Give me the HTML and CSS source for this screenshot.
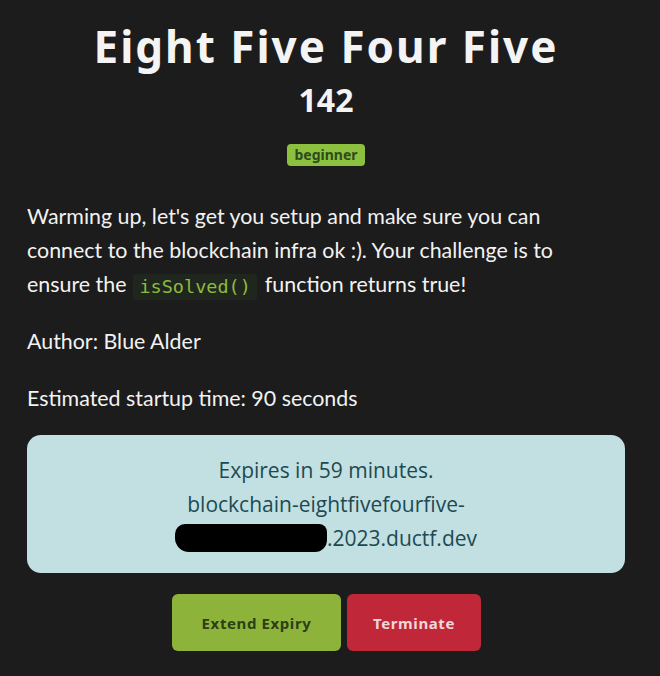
FILE: index.html
```html
<!DOCTYPE html>
<html lang="en">
<head>
<meta charset="utf-8">
<title>Eight Five Four Five</title>
<link rel="stylesheet" href="styles.css">
</head>
<body>
<main class="challenge">
  <header class="head">
    <h1 class="title">Eight Five Four Five</h1>
    <div class="points">142</div>
    <span class="badge">beginner</span>
  </header>
  <section class="desc">
    <p>Warming up, let's get you setup and make sure you can connect to the blockchain infra ok :). Your challenge is to <span class="run">ensure the</span><code class="code">isSolved()</code><span class="run">function returns true!</span></p>
    <p>Author: Blue Alder</p>
    <p>Estimated startup time: 90 seconds</p>
  </section>
  <section class="instance">
    <div class="line">Expires in 59 minutes.</div>
    <div class="line">blockchain-eightfivefourfive-</div>
    <div class="line"><span class="redact"></span>.2023.ductf.dev</div>
  </section>
  <div class="actions">
    <button class="btn btn-extend">Extend Expiry</button>
    <button class="btn btn-term">Terminate</button>
  </div>
</main>
</body>
</html>
```
FILE: styles.css
```css
html, body {
  margin: 0;
  padding: 0;
  background: #1c1c1c;
}
body {
  font-family: Lato, "Open Sans", sans-serif;
  color: #f2f2f2;
}
.challenge {
  padding: 19px 35px 0 27px;
}
.head {
  display: flex;
  flex-direction: column;
  align-items: center;
}
.title {
  margin: 0;
  font-family: "Noto Sans", sans-serif;
  font-weight: 700;
  font-size: 44px;
  line-height: 54px;
  letter-spacing: 2px;
  color: #f4f4f4;
}
.points {
  margin-top: 8px;
  font-family: "Noto Sans", sans-serif;
  font-weight: 700;
  font-size: 32px;
  line-height: 38px;
  color: #f4f4f4;
}
.badge {
  margin-top: 25px;
  background: #8cc13f;
  color: #2f4a1c;
  font-family: "Noto Sans", sans-serif;
  font-weight: 700;
  font-size: 14px;
  line-height: 22px;
  padding: 0 7px;
  border-radius: 4px;
}
.desc {
  margin-top: 33px;
  padding-right: 20px;
  padding-bottom: 1px;
  font-size: 21.4px;
  line-height: 34px;
}
.desc p {
  margin: 0 0 23px;
}
.desc p:last-child {
  margin-bottom: 0;
}
.code {
  display: inline-block;
  font-family: "DejaVu Sans Mono", monospace;
  font-size: 18.5px;
  line-height: 26px;
  color: #8fba3e;
  background: #1f261d;
  padding: 0 6px;
  margin: 0 8px 0 7px;
  border-radius: 3px;
  vertical-align: -1px;
}
.instance {
  margin-top: 19px;
  background: #c2e0e2;
  border-radius: 14px;
  padding: 18px 20px 18px;
  display: flex;
  flex-direction: column;
  align-items: center;
  color: #1d4a52;
  font-family: "Open Sans", sans-serif;
  font-size: 21px;
  line-height: 34px;
}
.redact {
  display: inline-block;
  width: 152px;
  height: 28px;
  background: #000;
  border-radius: 10px 8px 12px 14px;
  vertical-align: -6px;
}
.actions {
  display: flex;
  justify-content: center;
  gap: 6px;
  margin-top: 21px;
  padding-left: 1px;
}
.btn {
  height: 57px;
  border: none;
  border-radius: 6px;
  font-family: "Noto Sans", sans-serif;
  font-weight: 700;
  font-size: 15px;
  letter-spacing: 0.6px;
}
.btn-extend {
  width: 169px;
  background: #8db33a;
  color: #2c3f16;
}
.btn-term {
  width: 134px;
  background: #c0283a;
  color: #f1d6d8;
}
```
